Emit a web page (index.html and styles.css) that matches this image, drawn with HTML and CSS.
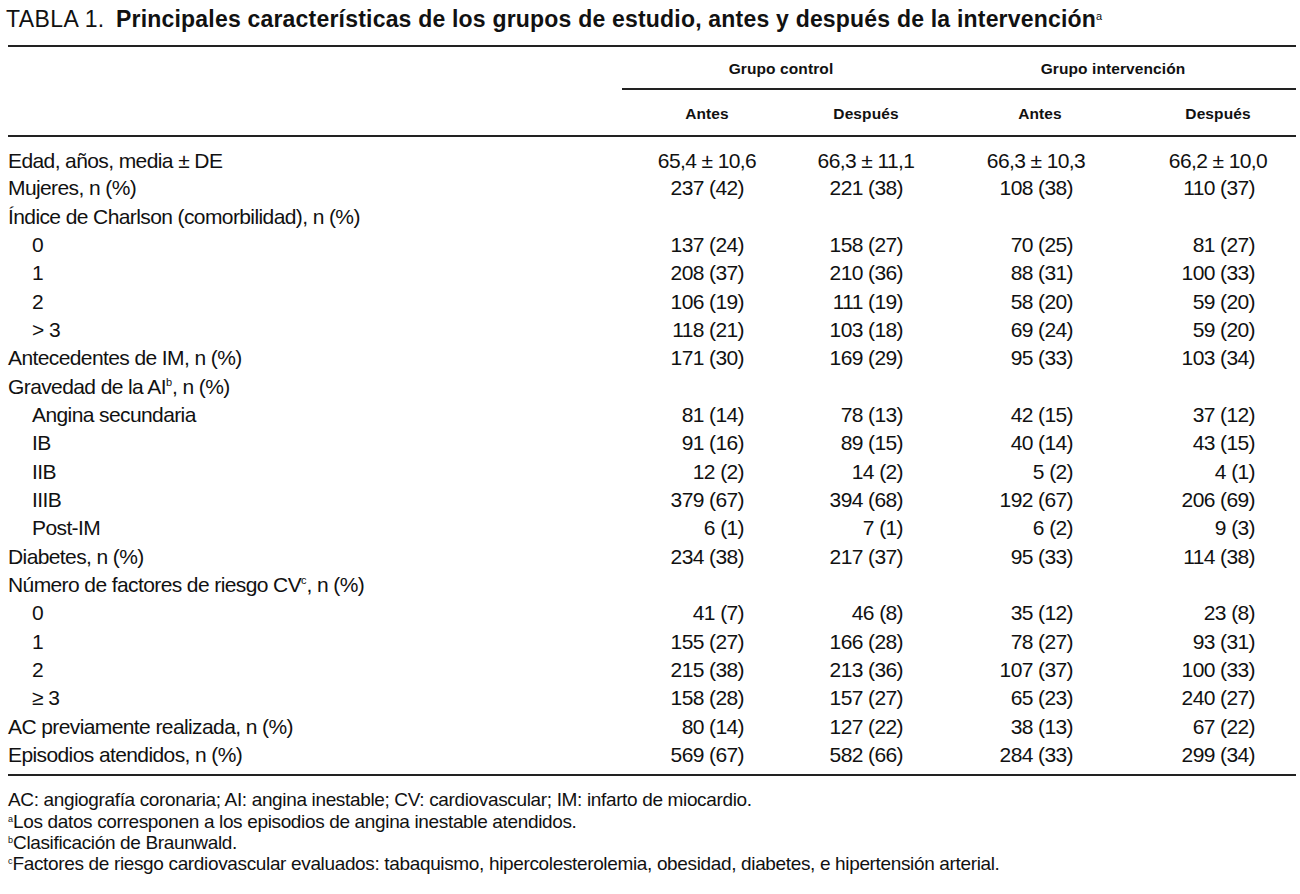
FILE: index.html
```html
<!DOCTYPE html>
<html lang="es">
<head>
<meta charset="utf-8">
<title>Tabla 1</title>
<link rel="stylesheet" href="styles.css">
</head>
<body>
<div class="page">
  <h1 class="title"><span class="title-num">TABLA 1.</span> <b>Principales características de los grupos de estudio, antes y después de la intervención</b><sup>a</sup></h1>
  <table class="data">
    <colgroup>
      <col class="c-label">
      <col class="c1">
      <col class="c2">
      <col class="c3">
      <col class="c4">
    </colgroup>
    <thead>
      <tr class="h-group">
        <th></th>
        <th colspan="2"><span class="group-label">Grupo control</span></th>
        <th colspan="2"><span class="group-label">Grupo intervención</span></th>
      </tr>
      <tr class="h-sub">
        <th></th>
        <th>Antes</th>
        <th>Después</th>
        <th>Antes</th>
        <th>Después</th>
      </tr>
    </thead>
    <tbody>
      <tr class="first"><td>Edad, años, media ± DE</td><td><span class="n">65,4 ± 10,6</span></td><td><span class="n">66,3 ± 11,1</span></td><td><span class="n">66,3 ± 10,3</span></td><td><span class="n">66,2 ± 10,0</span></td></tr>
      <tr><td>Mujeres, n (%)</td><td><span class="n">237 (42)</span></td><td><span class="n">221 (38)</span></td><td><span class="n">108 (38)</span></td><td><span class="n">110 (37)</span></td></tr>
      <tr><td>Índice de Charlson (comorbilidad), n (%)</td><td></td><td></td><td></td><td></td></tr>
      <tr><td class="sub">0</td><td><span class="n">137 (24)</span></td><td><span class="n">158 (27)</span></td><td><span class="n">70 (25)</span></td><td><span class="n">81 (27)</span></td></tr>
      <tr><td class="sub">1</td><td><span class="n">208 (37)</span></td><td><span class="n">210 (36)</span></td><td><span class="n">88 (31)</span></td><td><span class="n">100 (33)</span></td></tr>
      <tr><td class="sub">2</td><td><span class="n">106 (19)</span></td><td><span class="n">111 (19)</span></td><td><span class="n">58 (20)</span></td><td><span class="n">59 (20)</span></td></tr>
      <tr><td class="sub">&gt; 3</td><td><span class="n">118 (21)</span></td><td><span class="n">103 (18)</span></td><td><span class="n">69 (24)</span></td><td><span class="n">59 (20)</span></td></tr>
      <tr><td>Antecedentes de IM, n (%)</td><td><span class="n">171 (30)</span></td><td><span class="n">169 (29)</span></td><td><span class="n">95 (33)</span></td><td><span class="n">103 (34)</span></td></tr>
      <tr><td>Gravedad de la AI<sup>b</sup>, n (%)</td><td></td><td></td><td></td><td></td></tr>
      <tr><td class="sub">Angina secundaria</td><td><span class="n">81 (14)</span></td><td><span class="n">78 (13)</span></td><td><span class="n">42 (15)</span></td><td><span class="n">37 (12)</span></td></tr>
      <tr><td class="sub">IB</td><td><span class="n">91 (16)</span></td><td><span class="n">89 (15)</span></td><td><span class="n">40 (14)</span></td><td><span class="n">43 (15)</span></td></tr>
      <tr><td class="sub">IIB</td><td><span class="n">12 (2)</span></td><td><span class="n">14 (2)</span></td><td><span class="n">5 (2)</span></td><td><span class="n">4 (1)</span></td></tr>
      <tr><td class="sub">IIIB</td><td><span class="n">379 (67)</span></td><td><span class="n">394 (68)</span></td><td><span class="n">192 (67)</span></td><td><span class="n">206 (69)</span></td></tr>
      <tr><td class="sub">Post-IM</td><td><span class="n">6 (1)</span></td><td><span class="n">7 (1)</span></td><td><span class="n">6 (2)</span></td><td><span class="n">9 (3)</span></td></tr>
      <tr><td>Diabetes, n (%)</td><td><span class="n">234 (38)</span></td><td><span class="n">217 (37)</span></td><td><span class="n">95 (33)</span></td><td><span class="n">114 (38)</span></td></tr>
      <tr><td>Número de factores de riesgo CV<sup>c</sup>, n (%)</td><td></td><td></td><td></td><td></td></tr>
      <tr><td class="sub">0</td><td><span class="n">41 (7)</span></td><td><span class="n">46 (8)</span></td><td><span class="n">35 (12)</span></td><td><span class="n">23 (8)</span></td></tr>
      <tr><td class="sub">1</td><td><span class="n">155 (27)</span></td><td><span class="n">166 (28)</span></td><td><span class="n">78 (27)</span></td><td><span class="n">93 (31)</span></td></tr>
      <tr><td class="sub">2</td><td><span class="n">215 (38)</span></td><td><span class="n">213 (36)</span></td><td><span class="n">107 (37)</span></td><td><span class="n">100 (33)</span></td></tr>
      <tr><td class="sub">≥ 3</td><td><span class="n">158 (28)</span></td><td><span class="n">157 (27)</span></td><td><span class="n">65 (23)</span></td><td><span class="n">240 (27)</span></td></tr>
      <tr><td>AC previamente realizada, n (%)</td><td><span class="n">80 (14)</span></td><td><span class="n">127 (22)</span></td><td><span class="n">38 (13)</span></td><td><span class="n">67 (22)</span></td></tr>
      <tr class="last"><td>Episodios atendidos, n (%)</td><td><span class="n">569 (67)</span></td><td><span class="n">582 (66)</span></td><td><span class="n">284 (33)</span></td><td><span class="n">299 (34)</span></td></tr>
    </tbody>
  </table>
  <div class="notes">
    <p>AC: angiografía coronaria; AI: angina inestable; CV: cardiovascular; IM: infarto de miocardio.</p>
    <p><sup>a</sup>Los datos corresponen a los episodios de angina inestable atendidos.</p>
    <p><sup>b</sup>Clasificación de Braunwald.</p>
    <p><sup>c</sup>Factores de riesgo cardiovascular evaluados: tabaquismo, hipercolesterolemia, obesidad, diabetes, e hipertensión arterial.</p>
  </div>
</div>
</body>
</html>
```
FILE: styles.css
```css
* { box-sizing: border-box; }
html, body { margin: 0; padding: 0; background: #fff; }
body {
  color: #111;
  font-family: "Liberation Sans", Arial, sans-serif;
}
.page {
  width: 1300px;
  padding: 0 4px 0 8px;
}
.title {
  margin: 0 0 0 -2px;
  padding: 7px 0 0 0;
  height: 45px;
  font-size: 23px;
  font-weight: normal;
  line-height: 24px;
  letter-spacing: -0.1px;
  color: #111;
}
.title-num { letter-spacing: 0.4px; }
.title b {
  font-weight: bold;
  letter-spacing: 0.2px;
  margin-left: 5px;
}
.title sup {
  font-size: 11px;
  vertical-align: 7px;
  line-height: 0;
  font-weight: normal;
}
.data {
  width: 1288px;
  border-collapse: collapse;
  border-top: 2px solid #222;
  border-bottom: 2px solid #222;
  table-layout: fixed;
}
.c-label { width: 614px; }
.c1 { width: 170px; }
.c2 { width: 148px; }
.c3 { width: 200px; }
.c4 { width: 156px; }
.data th {
  font-weight: bold;
  font-size: 15.5px;
  letter-spacing: 0.1px;
  text-align: center;
  padding: 0;
}
.h-group th { height: 43px; padding-top: 3px; }
.h-group th[colspan] { border-bottom: 2px solid #222; }
.h-group th:last-child { padding-right: 10px; }
.h-sub th { height: 47px; padding-top: 3px; border-bottom: 2px solid #222; }
.data td {
  font-size: 21px;
  letter-spacing: -0.6px;
  height: 28.33px;
  line-height: 26px;
  padding: 0;
  white-space: nowrap;
  text-align: center;
}
.data td:first-child { text-align: left; }
.data td:nth-child(4) { padding-right: 8px; }
.data td.sub { padding-left: 24px; }
.data tr.first td { height: 38.33px; padding-top: 10px; }
.data tr.last td { height: 34.33px; padding-bottom: 6px; }
.n {
  display: inline-block;
  min-width: 74px;
  text-align: right;
}
.data sup {
  font-size: 11px;
  vertical-align: 8px;
  line-height: 0;
  letter-spacing: 0;
}
.notes {
  padding-top: 13px;
}
.notes p {
  margin: 0;
  font-size: 19px;
  line-height: 21.3px;
  letter-spacing: -0.35px;
}
.notes sup {
  font-size: 9px;
  vertical-align: 6px;
  line-height: 0;
  letter-spacing: 0;
}
```
